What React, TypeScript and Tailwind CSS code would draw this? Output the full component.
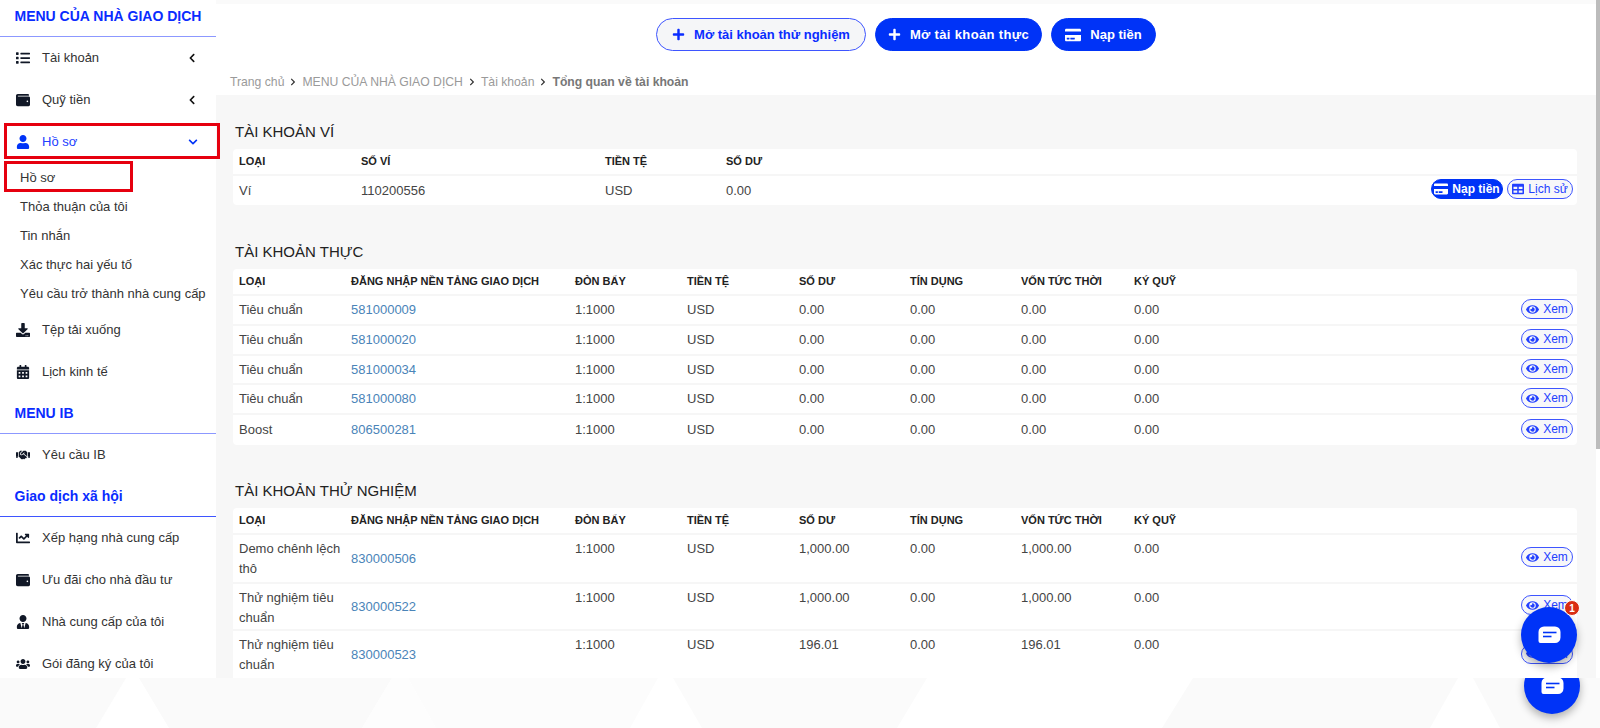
import type { ReactNode } from 'react'
import {
  FaCalendarAlt,
  FaChartLine,
  FaChevronDown,
  FaChevronLeft,
  FaChevronRight,
  FaCreditCard,
  FaDownload,
  FaEye,
  FaHandshake,
  FaList,
  FaPlus,
  FaTable,
  FaUser,
  FaUsers,
  FaUserTie,
  FaWallet,
} from 'react-icons/fa'

function MenuItem({
  icon,
  label,
  chevron,
  active,
}: {
  icon: ReactNode
  label: string
  chevron?: 'left' | 'down'
  active?: boolean
}) {
  return (
    <div
      className={`relative flex h-[42px] items-center pl-[16px] text-[13px] ${
        active ? 'text-[#2340ff]' : 'text-[#333]'
      }`}
    >
      <span
        className={`flex w-[26px] text-[14px] ${active ? 'text-[#0033f7]' : 'text-[#111827]'}`}
      >
        {icon}
      </span>
      <span>{label}</span>
      {chevron === 'left' && <FaChevronLeft className="ml-auto mr-[19px] text-[10px] text-[#111]" />}
      {chevron === 'down' && <FaChevronDown className="ml-auto mr-[18px] text-[10px] text-[#0033f7]" />}
      {active && (
        <span className="absolute left-[4px] top-[2px] h-[36px] w-[216px] border-[3px] border-[#e6000f]" />
      )}
    </div>
  )
}

function MenuHeading({ label, strong }: { label: string; strong?: boolean }) {
  return (
    <div
      className={`flex h-[41px] items-center border-b pl-[14.5px] text-[14px] font-bold text-[#0a2cff] ${
        strong ? 'border-[#3e55ff]' : 'border-[#8c98ff]'
      }`}
    >
      {label}
    </div>
  )
}

function Sidebar() {
  return (
    <aside className="relative z-10 w-[216px] shrink-0 bg-white">
      <div className="flex h-[37px] items-center border-b border-[#8c98ff] pb-[4px] pl-[14.5px] text-[14px] font-bold text-[#0a2cff]">
        MENU CỦA NHÀ GIAO DỊCH
      </div>
      <MenuItem icon={<FaList />} label="Tài khoản" chevron="left" />
      <MenuItem icon={<FaWallet />} label="Quỹ tiền" chevron="left" />
      <MenuItem icon={<FaUser />} label="Hồ sơ" chevron="down" active />
      <div className="relative h-[29px] pl-[20px] text-[13px] leading-[29px] text-[#333]">
        Hồ sơ
        <span className="absolute left-[4px] top-[-2px] h-[31px] w-[129px] border-[3px] border-[#e6000f]" />
      </div>
      {['Thỏa thuận của tôi', 'Tin nhắn', 'Xác thực hai yếu tố', 'Yêu cầu trở thành nhà cung cấp'].map((t) => (
        <div key={t} className="h-[29px] whitespace-nowrap pl-[20px] text-[13px] leading-[29px] text-[#333]">
          {t}
        </div>
      ))}
      <div className="h-[1px]" />
      <MenuItem icon={<FaDownload />} label="Tệp tải xuống" />
      <MenuItem icon={<FaCalendarAlt />} label="Lịch kinh tế" />
      <MenuHeading label="MENU IB" />
      <MenuItem icon={<FaHandshake />} label="Yêu cầu IB" />
      <MenuHeading label="Giao dịch xã hội" strong />
      <MenuItem icon={<FaChartLine />} label="Xếp hạng nhà cung cấp" />
      <MenuItem icon={<FaWallet />} label="Ưu đãi cho nhà đầu tư" />
      <MenuItem icon={<FaUserTie />} label="Nhà cung cấp của tôi" />
      <MenuItem icon={<FaUsers />} label="Gói đăng ký của tôi" />
    </aside>
  )
}

function TopButton({
  icon,
  label,
  outline,
  className = '',
}: {
  icon: ReactNode
  label: string
  outline?: boolean
  className?: string
}) {
  return (
    <button
      className={`flex h-[33px] items-center justify-center gap-[9px] rounded-full border text-[13px] font-bold ${
        outline
          ? 'border-[#3e55ff] bg-[#f5f6f8] text-[#0a2cff]'
          : 'border-[#0033f7] bg-[#0033f7] text-white'
      } ${className}`}
    >
      {icon}
      {label}
    </button>
  )
}

function SmallButton({ icon, label, className = '', solid }: { icon: ReactNode; label: string; className?: string; solid?: boolean }) {
  return (
    <button
      className={`inline-flex h-[20px] items-center justify-center gap-[4px] rounded-full border text-[12px] ${
        solid
          ? 'border-[#0033f7] bg-[#0033f7] font-bold text-white'
          : 'border-[#3e55ff] bg-[#f7f7f9] text-[#2340ff]'
      } ${className}`}
    >
      {icon}
      {label}
    </button>
  )
}

function Breadcrumb() {
  const sep = <FaChevronRight className="mx-[5px] text-[8px] text-[#333]" />
  return (
    <div className="flex items-center pl-[14px] text-[12.2px] text-[#9a9a9a]">
      <span>Trang chủ</span>
      {sep}
      <span>MENU CỦA NHÀ GIAO DỊCH</span>
      {sep}
      <span>Tài khoản</span>
      {sep}
      <span className="font-bold text-[#777]">Tổng quan về tài khoản</span>
    </div>
  )
}

const accountCols = ['LOẠI', 'ĐĂNG NHẬP NỀN TẢNG GIAO DỊCH', 'ĐÒN BẨY', 'TIỀN TỆ', 'SỐ DƯ', 'TÍN DỤNG', 'VỐN TỨC THỜI', 'KÝ QUỸ']
const realAccounts = [
  ['Tiêu chuẩn', '581000009', 'h-[30px]'],
  ['Tiêu chuẩn', '581000020', 'h-[30px]'],
  ['Tiêu chuẩn', '581000034', 'h-[29px]'],
  ['Tiêu chuẩn', '581000080', 'h-[30px]'],
  ['Boost', '806500281', 'h-[31px]'],
]
const demoAccounts = [
  ['Demo chênh lệch thô', '830000506', '1,000.00', 'h-[49px]'],
  ['Thử nghiệm tiêu chuẩn', '830000522', '1,000.00', 'h-[47px]'],
  ['Thử nghiệm tiêu chuẩn', '830000523', '196.01', 'h-[50px]'],
]

function HeaderRow({ cols }: { cols: string[] }) {
  return (
    <tr className="h-[26px] border-b-2 border-[#f6f6f6] text-left text-[11px] font-bold text-[#222]">
      {cols.map((c) => (
        <th key={c} className="p-0 pl-[6px] font-bold">
          {c}
        </th>
      ))}
      <th />
    </tr>
  )
}

function AccountCols() {
  return (
    <colgroup>
      <col className="w-[112px]" />
      <col className="w-[224px]" />
      <col className="w-[112px]" />
      <col className="w-[112px]" />
      <col className="w-[111px]" />
      <col className="w-[111px]" />
      <col className="w-[113px]" />
      <col className="w-[100px]" />
      <col />
    </colgroup>
  )
}

const view = <SmallButton className="w-[52px]" icon={<FaEye className="text-[13px]" />} label="Xem" />

function ChatBubble({ className = '' }: { className?: string }) {
  return (
    <div
      className={`flex h-[56px] w-[56px] items-center justify-center rounded-full bg-[#0033f7] shadow-[0_4px_8px_rgba(0,0,0,0.3)] ${className}`}
    >
      <svg width="23" height="18" viewBox="0 0 23 18">
        <path d="M6 0.5h11a5.5 5.5 0 0 1 5.5 5.5v5.5a5.5 5.5 0 0 1-5.5 5.5H2.5a2 2 0 0 1-2-2V6A5.5 5.5 0 0 1 6 0.5z" fill="#fff" />
        <path d="M5 6.5h13.5" stroke="#0033f7" strokeWidth="1.6" />
        <path d="M5 10.5h8.5" stroke="#0033f7" strokeWidth="1.6" />
      </svg>
    </div>
  )
}

export default function App() {
  return (
    <div className="relative flex h-[728px] w-[1600px] flex-col overflow-hidden bg-white font-['Liberation_Sans',Arial,sans-serif]">
      <div className="flex h-[678px] overflow-hidden">
        <Sidebar />
        <main className="min-w-0 flex-1 overflow-hidden bg-[#f7f7f7]">
          <div className="h-[95px] border-t-[4px] border-[#fafafa] bg-white">
            <div className="flex gap-[9px] pl-[440px] pt-[14px]">
              <TopButton className="w-[210px]" outline icon={<FaPlus className="text-[13px]" />} label="Mở tài khoản thử nghiệm" />
              <TopButton className="w-[167px] tracking-[0.35px]" icon={<FaPlus className="text-[13px]" />} label="Mở tài khoản thực" />
              <TopButton className="w-[105px]" icon={<FaCreditCard className="text-[16px]" />} label="Nạp tiền" />
            </div>
            <div className="pt-[22px]">
              <Breadcrumb />
            </div>
          </div>

          <div className="pl-[17px] pr-[19px]">
            <h2 className="mt-[27px] h-[27px] pl-[2px] text-[15px] leading-[20px] text-[#222]">TÀI KHOẢN VÍ</h2>
            <div className="rounded-[4px] bg-white">
              <table className="w-full table-fixed border-collapse">
                <colgroup>
                  <col className="w-[122px]" />
                  <col className="w-[244px]" />
                  <col className="w-[121px]" />
                  <col className="w-[300px]" />
                  <col />
                </colgroup>
                <thead>
                  <HeaderRow cols={['LOẠI', 'SỐ VÍ', 'TIỀN TỆ', 'SỐ DƯ']} />
                </thead>
                <tbody>
                  <tr className="h-[30px] text-[13px] text-[#444]">
                    <td className="pl-[6px]">Ví</td>
                    <td className="pl-[6px]">110200556</td>
                    <td className="pl-[6px]">USD</td>
                    <td className="pl-[6px]">0.00</td>
                    <td className="pr-[4px] text-right">
                      <span className="inline-flex gap-[4px]">
                        <SmallButton className="w-[72px]" solid icon={<FaCreditCard className="text-[14px]" />} label="Nạp tiền" />
                        <SmallButton className="w-[66px]" icon={<FaTable className="text-[12px]" />} label="Lịch sử" />
                      </span>
                    </td>
                  </tr>
                </tbody>
              </table>
            </div>

            <h2 className="mt-[37px] h-[27px] pl-[2px] text-[15px] leading-[20px] text-[#222]">TÀI KHOẢN THỰC</h2>
            <div className="rounded-[4px] bg-white">
              <table className="w-full table-fixed border-collapse">
                <AccountCols />
                <thead>
                  <HeaderRow cols={accountCols} />
                </thead>
                <tbody>
                  {realAccounts.map(([type, login, height], i) => (
                    <tr
                      key={login}
                      className={`${height} text-[13px] text-[#444] ${i < 4 ? 'border-b-2 border-[#f6f6f6]' : ''}`}
                    >
                      <td className="pl-[6px]">{type}</td>
                      <td className="pl-[6px] text-[#4a84b8]">{login}</td>
                      <td className="pl-[6px]">1:1000</td>
                      <td className="pl-[6px]">USD</td>
                      <td className="pl-[6px]">0.00</td>
                      <td className="pl-[6px]">0.00</td>
                      <td className="pl-[6px]">0.00</td>
                      <td className="pl-[6px]">0.00</td>
                      <td className="pr-[4px] text-right">{view}</td>
                    </tr>
                  ))}
                </tbody>
              </table>
            </div>

            <h2 className="mt-[36px] h-[27px] pl-[2px] text-[15px] leading-[20px] text-[#222]">TÀI KHOẢN THỬ NGHIỆM</h2>
            <div className="rounded-[4px] bg-white">
              <table className="w-full table-fixed border-collapse">
                <AccountCols />
                <thead>
                  <HeaderRow cols={accountCols} />
                </thead>
                <tbody>
                  {demoAccounts.map(([type, login, amount, height]) => (
                    <tr key={login} className={`${height} border-b-2 border-[#f6f6f6] text-[13px] leading-[20px] text-[#444]`}>
                      <td className="pl-[6px] pr-[4px] pt-[4px] align-top">{type}</td>
                      <td className="pl-[6px] align-middle text-[#4a84b8]">{login}</td>
                      <td className="pl-[6px] pt-[4px] align-top">1:1000</td>
                      <td className="pl-[6px] pt-[4px] align-top">USD</td>
                      <td className="pl-[6px] pt-[4px] align-top">{amount}</td>
                      <td className="pl-[6px] pt-[4px] align-top">0.00</td>
                      <td className="pl-[6px] pt-[4px] align-top">{amount}</td>
                      <td className="pl-[6px] pt-[4px] align-top">0.00</td>
                      <td className="pr-[4px] text-right align-middle">{view}</td>
                    </tr>
                  ))}
                </tbody>
              </table>
            </div>
          </div>
        </main>
        <div className="w-[4px] shrink-0 bg-white">
          <div className="h-[449px] bg-[#bcbcbc]" />
        </div>
      </div>

      <div className="relative h-[50px] overflow-hidden">
        <svg width="1600" height="50" viewBox="0 0 1600 50">
          <polygon points="0,0 126,0 96,50 0,50" fill="#fafafa" />
          <polygon points="139,0 392,0 362,50 169,50" fill="#fafafa" />
          <polygon points="408,0 658,0 630,50 436,50" fill="#fcfcfc" />
          <polygon points="392,0 408,0 436,50 362,50" fill="#fdfdfd" />
          <polygon points="673,0 927,0 897,50 702,50" fill="#fbfbfb" />
          <polygon points="1193,0 1458,0 1430,50 1162,50" fill="#fafafa" />
          <polygon points="1473,0 1600,0 1600,50 1500,50" fill="#fafafa" />
        </svg>
        <ChatBubble className="absolute left-[1524px] top-[-20px]" />
      </div>

      <div className="absolute left-[1521px] top-[607px]">
        <ChatBubble />
        <span className="absolute right-[-3px] top-[-7px] flex h-[16px] w-[16px] items-center justify-center rounded-full border border-white bg-[#d92d12] text-[10px] font-bold text-white">
          1
        </span>
      </div>
    </div>
  )
}
